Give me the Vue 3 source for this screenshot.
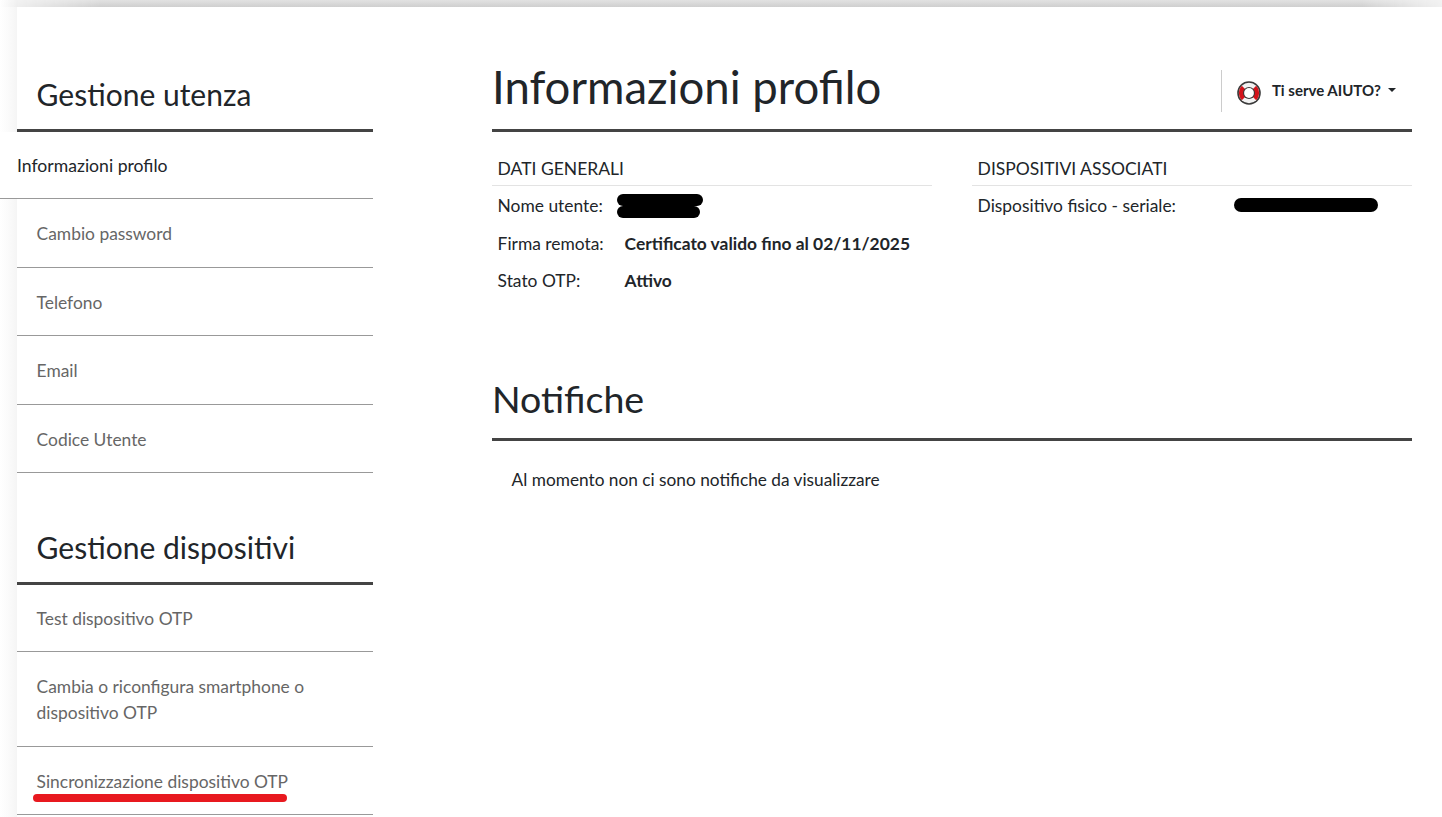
<script setup>
const userMenu = [
  { label: 'Informazioni profilo', active: true },
  { label: 'Cambio password' },
  { label: 'Telefono' },
  { label: 'Email' },
  { label: 'Codice Utente' },
]
const deviceMenu = [
  { label: 'Test dispositivo OTP' },
  { label: 'Cambia o riconfigura smartphone o dispositivo OTP' },
  { label: 'Sincronizzazione dispositivo OTP', marked: true },
]
</script>

<template>
  <div class="page">
    <div class="top-shadow"></div>
    <div class="card">
      <aside class="sidebar">
        <h2 class="side-title">Gestione utenza</h2>
        <ul class="menu">
          <li v-for="item in userMenu" :key="item.label" :class="['menu-item', { active: item.active }]">
            <a>{{ item.label }}</a>
          </li>
        </ul>
        <h2 class="side-title second">Gestione dispositivi</h2>
        <ul class="menu tight">
          <li v-for="item in deviceMenu" :key="item.label" :class="['menu-item', { marked: item.marked }]">
            <a>{{ item.label }}</a>
            <span v-if="item.marked" class="red-mark"></span>
          </li>
        </ul>
      </aside>

      <main class="content">
        <header class="head">
          <h1>Informazioni profilo</h1>
          <div class="help">
            <svg class="buoy" viewBox="0 0 24 24" width="24" height="24" aria-hidden="true">
              <circle cx="12" cy="12" r="11.8" fill="#3a3a3a" />
              <circle cx="12" cy="12" r="10.2" fill="#f2f2f2" />
              <path d="M4.8 4.8 L9 9 A4.2 4.2 0 0 0 9 15 L4.8 19.2 A10.2 10.2 0 0 1 4.8 4.8Z" fill="#d3121a" />
              <path d="M19.2 4.8 L15 9 A4.2 4.2 0 0 1 15 15 L19.2 19.2 A10.2 10.2 0 0 0 19.2 4.8Z" fill="#d3121a" />
              <circle cx="12" cy="12" r="6" fill="#3a3a3a" />
              <circle cx="12" cy="12" r="4.9" fill="#fff" />
            </svg>
            <span class="help-label">Ti serve AIUTO?</span>
            <span class="caret"></span>
          </div>
        </header>

        <div class="columns">
          <section class="col">
            <h3 class="col-title">DATI GENERALI</h3>
            <div class="row">
              <span class="key short">Nome utente:</span>
              <span class="redact-name"><i></i><i></i></span>
            </div>
            <div class="row">
              <span class="key">Firma remota:</span>
              <strong>Certificato valido fino al 02/11/2025</strong>
            </div>
            <div class="row last">
              <span class="key">Stato OTP:</span>
              <strong>Attivo</strong>
            </div>
          </section>
          <section class="col">
            <h3 class="col-title">DISPOSITIVI ASSOCIATI</h3>
            <div class="row">
              <span class="key wide">Dispositivo fisico - seriale:</span>
              <span class="redact-serial"></span>
            </div>
          </section>
        </div>

        <h1 class="notif-title">Notifiche</h1>
        <p class="empty">Al momento non ci sono notifiche da visualizzare</p>
      </main>
    </div>
  </div>
</template>

<style>
html, body { margin: 0; background: #fff; overflow: hidden; }
</style>

<style scoped>
.page {
  position: relative;
  width: 1442px;
  height: 817px;
  overflow: hidden;
  box-sizing: border-box;
  padding: 7px 0 0 17px;
  background: linear-gradient(to right, #fff 0, #fbfbfb 8px, #f5f5f5 17px);
  font-family: Lato, "Open Sans", sans-serif;
  color: #212529;
  font-size: 17.25px;
}
.top-shadow {
  position: absolute;
  left: 0;
  right: 0;
  top: 0;
  height: 7px;
  background: linear-gradient(to bottom, #e2e2e2, #cfcfcf);
  -webkit-mask-image: linear-gradient(to right, transparent 0, #000 100px, #000 1362px, transparent 1450px);
  mask-image: linear-gradient(to right, transparent 0, #000 100px, #000 1362px, transparent 1450px);
}
.card {
  display: flex;
  height: 810px;
  background: #fff;
}
.sidebar {
  flex: none;
  width: 356px;
  padding-top: 67px;
}
.side-title {
  margin: 0;
  padding: 0 19.6px 0;
  height: 58px;
  box-sizing: border-box;
  border-bottom: 3px solid #444;
  font-size: 30px;
  font-weight: 400;
  line-height: 40px;
  color: #212529;
}
.side-title.second {
  margin-top: 54px;
}
.menu {
  list-style: none;
  margin: 0;
  padding: 0;
}
.menu.tight {
  margin-top: -1.5px;
}
.menu-item {
  position: relative;
  padding: 22px 19.6px 19.5px;
  border-bottom: 1px solid #999;
  line-height: 26px;
  color: #666;
  font-size: 17.4px;
}
.menu-item.active {
  margin-left: -17px;
  padding: 21px 20px 19px 17px;
  background: #fff;
  color: #212529;
  font-size: 17.6px;
}
.red-mark {
  position: absolute;
  left: 16px;
  top: 47px;
  width: 254px;
  height: 8px;
  border-radius: 4px;
  background: #e8191f;
}
.content {
  flex: none;
  width: 920px;
  margin-left: 119px;
  padding-top: 48px;
}
.head {
  display: flex;
  align-items: flex-start;
  justify-content: space-between;
  height: 74px;
  border-bottom: 3px solid #444;
}
h1 {
  margin: 0;
  font-size: 45.5px;
  font-weight: 400;
  line-height: 64px;
  color: #212529;
}
.help {
  display: flex;
  align-items: center;
  height: 42px;
  margin-top: 15px;
  margin-right: 16px;
  padding-left: 15px;
  border-left: 1px solid #ccc;
}
.buoy {
  margin-top: 4px;
}
.help-label {
  margin-left: 11px;
  margin-bottom: 2px;
  font-size: 15px;
  font-weight: 700;
  color: #212529;
}
.caret {
  margin-left: 7px;
  margin-bottom: 2px;
  border-top: 4px solid #212529;
  border-left: 4px solid transparent;
  border-right: 4px solid transparent;
}
.columns {
  display: flex;
  gap: 40px;
  margin-top: 22px;
  height: 211px;
  font-size: 17.4px;
}
.col {
  width: 440px;
}
.col-title {
  margin: 0;
  padding: 0 5.6px;
  height: 31px;
  border-bottom: 1px solid #e3e3e3;
  font-size: 17.5px;
  font-weight: 400;
  line-height: 30px;
  color: #212529;
}
.row {
  display: flex;
  align-items: center;
  padding-left: 5.6px;
  height: 38px;
}
.row.last {
  height: 37px;
}
.key {
  width: 127px;
  flex: none;
}
.key.short { width: 119px; }
.key.wide { width: 256px; }
strong { font-weight: 700; }
.redact-name {
  display: block;
  width: 86px;
  margin-top: 1px;
}
.redact-name i {
  display: block;
  height: 12px;
  background: #000;
  border-radius: 6px;
}
.redact-name i:last-child { width: 83px; }
.redact-serial {
  display: block;
  width: 144px;
  height: 14px;
  border-radius: 7px;
  background: #000;
}
.notif-title {
  font-size: 37.5px;
  line-height: 52px;
  height: 76px;
  box-sizing: border-box;
  padding-top: 8px;
  border-bottom: 3px solid #444;
}
.empty {
  margin: 26px 0 0 19.6px;
  line-height: 26px;
}
</style>
